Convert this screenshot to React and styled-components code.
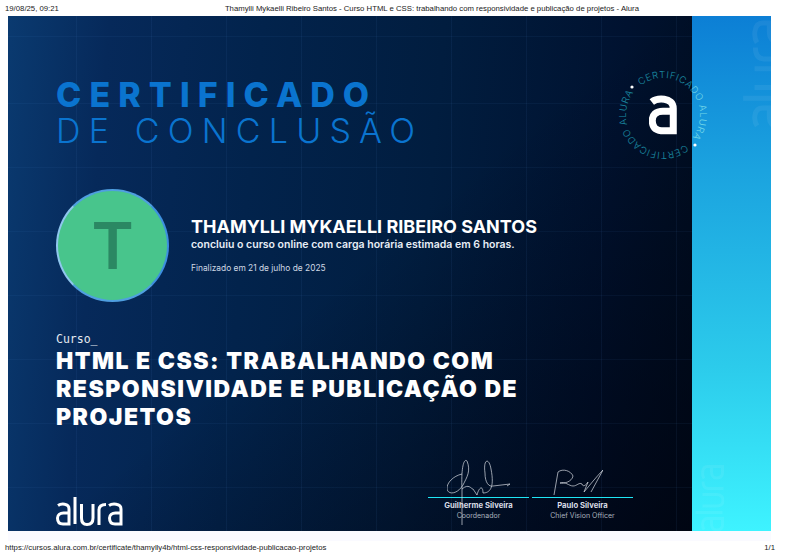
import React from "react";
import styled, { createGlobalStyle } from "styled-components";

const GlobalStyle = createGlobalStyle`
  html, body {
    margin: 0;
    padding: 0;
    background: #fff;
  }
`;

const Page = styled.div`
  width: 785px;
  height: 553px;
  overflow: hidden;
  display: flex;
  flex-direction: column;
  font-family: "Inter", "Liberation Sans", sans-serif;
`;

const PrintBar = styled.div`
  height: ${(p) => p.$height}px;
  padding: 0 10px 0 5px;
  display: flex;
  align-items: center;
  justify-content: space-between;
  font-family: "Liberation Sans", Arial, sans-serif;
  font-size: 7.75px;
  color: #222;
  white-space: nowrap;
`;

const PrintTitle = styled.span`
  margin-left: 30px;
`;

const Sheet = styled.div`
  margin-left: 8px;
  width: 763px;
  height: 515px;
  position: relative;
  display: grid;
  grid-template-columns: 684px 79px;
`;

const Strip = styled.div`
  margin-left: 8px;
  width: 763px;
  height: 10px;
  background: #fafaff;
`;

const Panel = styled.main`
  display: flex;
  flex-direction: column;
  padding: 61px 0 0 48px;
  color: #fff;
  background:
    repeating-linear-gradient(90deg, transparent 0 74px, rgba(90, 150, 230, 0.07) 74px 75px) -6px 0,
    repeating-linear-gradient(180deg, transparent 0 63px, rgba(90, 150, 230, 0.06) 63px 64px) 0 24px,
    linear-gradient(140deg, rgba(0, 0, 0, 0) 50%, rgba(0, 2, 12, 0.7) 100%),
    linear-gradient(95deg, #0a3a70 0%, #06295a 14%, #02234c 35%, #011d3f 60%, #001230 85%, #000e22 100%);
`;

const Side = styled.aside`
  position: relative;
  overflow: hidden;
  background: linear-gradient(180deg, #0c7fd5 0%, #1ba3df 30%, #2ccbeb 68%, #3ef3ff 100%);
`;

const Ghost = styled.svg`
  position: absolute;
  left: ${(p) => p.$left}px;
  top: ${(p) => p.$top}px;
  transform: rotate(-90deg);
  opacity: ${(p) => p.$opacity};
`;

const Heading = styled.h1`
  margin: 0;
  font-size: 34px;
  line-height: 36px;
  color: #0a74cf;
`;

const HeadingStrong = styled.span`
  display: block;
  font-weight: 800;
  letter-spacing: 8.1px;
`;

const HeadingLight = styled.span`
  display: block;
  font-weight: 300;
  letter-spacing: 8.2px;
`;

const Student = styled.section`
  margin-top: 40px;
  display: flex;
  align-items: center;
  gap: 22px;
`;

const Avatar = styled.div`
  width: 113px;
  height: 113px;
  box-sizing: border-box;
  border-radius: 50%;
  border: 2px solid #4f9fe0;
  border-left-color: #8fc6ee;
  border-right-color: #3d8fe0;
  background: #48c58c;
  color: #2b8863;
  display: flex;
  align-items: center;
  justify-content: center;
  font-size: 64px;
  font-weight: 600;
`;

const StudentInfo = styled.div`
  display: flex;
  flex-direction: column;
  margin-top: -1px;
`;

const StudentName = styled.div`
  font-size: 18px;
  line-height: 22px;
  font-weight: 700;
`;

const StudentNote = styled.div`
  font-size: 10.5px;
  line-height: 14px;
  font-weight: 600;
  color: #e8eef6;
`;

const StudentDate = styled.div`
  margin-top: 10px;
  font-size: 8.4px;
  line-height: 12px;
  color: #cfd8e4;
`;

const Course = styled.section`
  margin-top: 30px;
`;

const CourseLabel = styled.div`
  font-family: "DejaVu Sans Mono", monospace;
  font-size: 11.5px;
  line-height: 14px;
  color: #e4e9f0;
`;

const CourseTitle = styled.h2`
  margin: 1px 0 0;
  width: 490px;
  font-size: 23px;
  line-height: 28px;
  font-weight: 900;
  letter-spacing: 1.5px;
`;

const Foot = styled.footer`
  margin-top: auto;
  display: flex;
  align-items: flex-end;
  justify-content: space-between;
  padding: 0 59px 5px 0;
`;

const Signatures = styled.div`
  display: flex;
  gap: 3px;
  margin-bottom: 5px;
`;

const Signer = styled.div`
  width: 101px;
  position: relative;
  border-top: 1px solid #1fe6f5;
  padding-top: 3px;
  text-align: center;
`;

const SignerName = styled.div`
  font-size: 7.7px;
  line-height: 10px;
  font-weight: 700;
  color: #d9dee6;
`;

const SignerRole = styled.div`
  font-size: 7px;
  line-height: 10px;
  color: #aab2bd;
`;

const Scribble = styled.svg`
  position: absolute;
  left: ${(p) => p.$left}px;
  bottom: ${(p) => p.$bottom}px;
  fill: none;
  stroke: #d8dde4;
  stroke-width: 0.7;
`;

const Seal = styled.svg`
  position: absolute;
  left: 594px;
  top: 37px;
`;

const SealText = styled.text`
  font-family: "Inter", sans-serif;
  font-size: 9.5px;
  font-weight: 300;
  fill: url(#seal-ink);
`;

const sealArcs = [
  { id: "arc-top", d: "M 34.8 35.8 A 37 37 0 0 1 87.2 88.2" },
  { id: "arc-bottom", d: "M 87.2 88.2 A 37 37 0 0 1 34.8 35.8" },
];

const signers = [
  {
    name: "Guilherme Silveira",
    role: "Coordenador",
    left: 19,
    bottom: -6,
    width: 64,
    height: 68,
    path: "M15 15 C6 17 0 24 0 29 C0 36 10 36 16 26 C20 18 24 12 20 2 C17 -1 14 8 15 30 L15 66 M15 30 C22 24 24 30 26 30 L30 36 C32 28 36 26 36 34 C42 34 48 30 44 10 C42 -2 36 0 38 14 C38 24 42 28 46 27 L63 25 L60 27",
  },
  {
    name: "Paulo Silveira",
    role: "Chief Vision Officer",
    left: 21,
    bottom: 23,
    width: 50,
    height: 30,
    path: "M1 27 L5 4 C10 0 18 3 20 8 C19 14 10 16 7 15 C12 13 16 18 20 18 C24 18 26 14 29 16 C30 20 34 16 35 14 L31 24 C36 18 44 8 50 2 L38 24",
  },
];

function AluraMark() {
  return (
    <svg x="47" y="42" width="28" height="40" viewBox="0 0 30 42" fill="none" stroke="#fff" strokeWidth="7.5">
      <path d="M3 7 C8 3 26 1 26 14 V38 H16 C6 38 3.5 33 3.5 27 C3.5 21 7 17 15 17 H26" />
    </svg>
  );
}

function WordmarkStrokes() {
  return (
    <>
      <path d="M2 9.5 C5 7.5 13 7 13 13 V28 H7 C2 28 1.5 24.5 1.5 22 C1.5 19 4 17 7.5 17 H13" />
      <path d="M19 1 V28" />
      <path d="M25.5 8 V22 C25.5 27 28 28.5 31 28.5 C34 28.5 37 27 37 22 V8" />
      <path d="M43 29 V14 C43 10 46 8.5 50 8.5" />
      <path d="M53 9.5 C56 7.5 65 7 65 13 V28 H59 C54 28 53.5 24.5 53.5 22 C53.5 19 56 17 59.5 17 H65" />
    </>
  );
}

function AluraWordmark() {
  return (
    <svg width="67" height="30" viewBox="0 0 67 30" fill="none" stroke="#fff" strokeWidth="3">
      <WordmarkStrokes />
    </svg>
  );
}

export default function App() {
  return (
    <Page>
      <GlobalStyle />
      <PrintBar $height={16}>
        <span>19/08/25, 09:21</span>
        <PrintTitle>Thamylli Mykaelli Ribeiro Santos - Curso HTML e CSS: trabalhando com responsividade e publicação de projetos - Alura</PrintTitle>
        <span />
      </PrintBar>
      <Sheet>
        <Panel>
          <Heading>
            <HeadingStrong>CERTIFICADO</HeadingStrong>
            <HeadingLight>DE CONCLUSÃO</HeadingLight>
          </Heading>
          <Student>
            <Avatar>T</Avatar>
            <StudentInfo>
              <StudentName>THAMYLLI MYKAELLI RIBEIRO SANTOS</StudentName>
              <StudentNote>concluiu o curso online com carga horária estimada em 6 horas.</StudentNote>
              <StudentDate>Finalizado em 21 de julho de 2025</StudentDate>
            </StudentInfo>
          </Student>
          <Course>
            <CourseLabel>Curso_</CourseLabel>
            <CourseTitle>HTML E CSS: TRABALHANDO COM RESPONSIVIDADE E PUBLICAÇÃO DE PROJETOS</CourseTitle>
          </Course>
          <Foot>
            <AluraWordmark />
            <Signatures>
              {signers.map((signer) => (
                <Signer key={signer.name}>
                  <Scribble
                    $left={signer.left}
                    $bottom={signer.bottom}
                    width={signer.width}
                    height={signer.height}
                    viewBox={`0 0 ${signer.width} ${signer.height}`}
                  >
                    <path d={signer.path} />
                  </Scribble>
                  <SignerName>{signer.name}</SignerName>
                  <SignerRole>{signer.role}</SignerRole>
                </Signer>
              ))}
            </Signatures>
          </Foot>
        </Panel>
        <Side>
          <Ghost $left={19} $top={34} $opacity={0.06} width="110" height="49" viewBox="0 0 67 30" fill="none" stroke="#fff" strokeWidth="3">
            <WordmarkStrokes />
          </Ghost>
          <Ghost $left={-16} $top={467} $opacity={0.06} width="67" height="30" viewBox="0 0 67 30" fill="none" stroke="#fff" strokeWidth="3">
            <WordmarkStrokes />
          </Ghost>
        </Side>
        <Seal width="122" height="124" viewBox="0 0 122 124">
          <defs>
            <linearGradient id="seal-ink" gradientUnits="userSpaceOnUse" x1="0" y1="0" x2="122" y2="0">
              <stop offset="0.738" stopColor="#1a8ea6" />
              <stop offset="0.738" stopColor="#74d8e8" />
            </linearGradient>
            {sealArcs.map((arc) => (
              <path key={arc.id} id={arc.id} d={arc.d} />
            ))}
          </defs>
          {sealArcs.map((arc) => (
            <SealText key={arc.id}>
              <textPath href={`#${arc.id}`} startOffset="5" textLength="106" lengthAdjust="spacing">
                CERTIFICADO ALURA
              </textPath>
            </SealText>
          ))}
          <circle cx="30" cy="34" r="1.6" fill="#fff" />
          <circle cx="93" cy="92" r="1.6" fill="#fff" />
          <AluraMark />
        </Seal>
      </Sheet>
      <Strip />
      <PrintBar $height={12}>
        <span>https://cursos.alura.com.br/certificate/thamylly4b/html-css-responsividade-publicacao-projetos</span>
        <span>1/1</span>
      </PrintBar>
    </Page>
  );
}
